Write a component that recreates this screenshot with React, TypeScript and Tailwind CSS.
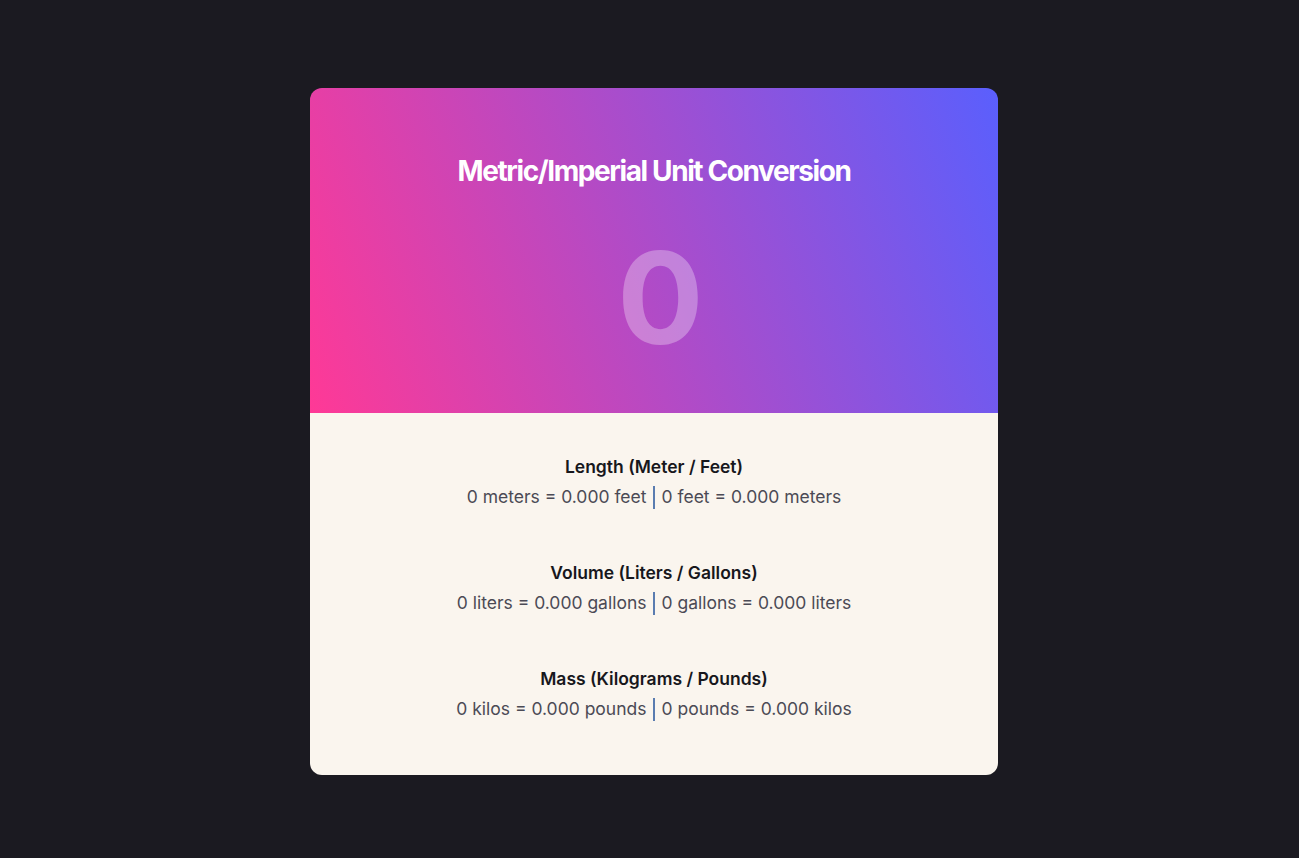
import React from 'react'

interface Conversion {
  title: string
  left: string
  right: string
}

const conversions: Conversion[] = [
  {
    title: 'Length (Meter / Feet)',
    left: '0 meters = 0.000 feet',
    right: '0 feet = 0.000 meters',
  },
  {
    title: 'Volume (Liters / Gallons)',
    left: '0 liters = 0.000 gallons',
    right: '0 gallons = 0.000 liters',
  },
  {
    title: 'Mass (Kilograms / Pounds)',
    left: '0 kilos = 0.000 pounds',
    right: '0 pounds = 0.000 kilos',
  },
]

const App: React.FC = () => {
  return (
    <div className="min-h-screen bg-[#1b1a21] flex justify-center pt-[88px] pl-[9px] font-['Inter',sans-serif]">
      <div className="w-[688px] h-[687px] rounded-xl overflow-hidden flex flex-col">
        <div className="h-[325px] bg-[linear-gradient(70deg,#ff3996,#5a5ffd)] flex flex-col items-center">
          <h1 className="mt-[66px] text-[28px] font-bold tracking-[-0.05em] text-white leading-[34px]">
            Metric/Imperial Unit Conversion
          </h1>
          <div className="mt-[46px] text-[128px] font-bold leading-none tracking-[-0.1em] text-white/30">
            0
          </div>
        </div>

        <div className="flex-1 bg-[#faf5ee] flex flex-col items-center pt-[41px] gap-[50px]">
          {conversions.map((c) => (
            <div key={c.title} className="flex flex-col items-center">
              <p className="text-[17.5px] font-semibold text-[#17171c] leading-[26px]">{c.title}</p>
              <p className="mt-[4px] text-[17.5px] text-[#4b4a55] leading-[26px] flex items-center">
                <span>{c.left}</span>
                <span className="ml-[6px] mr-[7px] w-[2px] h-[23px] bg-[#5a7cb0]"></span>
                <span>{c.right}</span>
              </p>
            </div>
          ))}
        </div>
      </div>
    </div>
  )
}

export default App
